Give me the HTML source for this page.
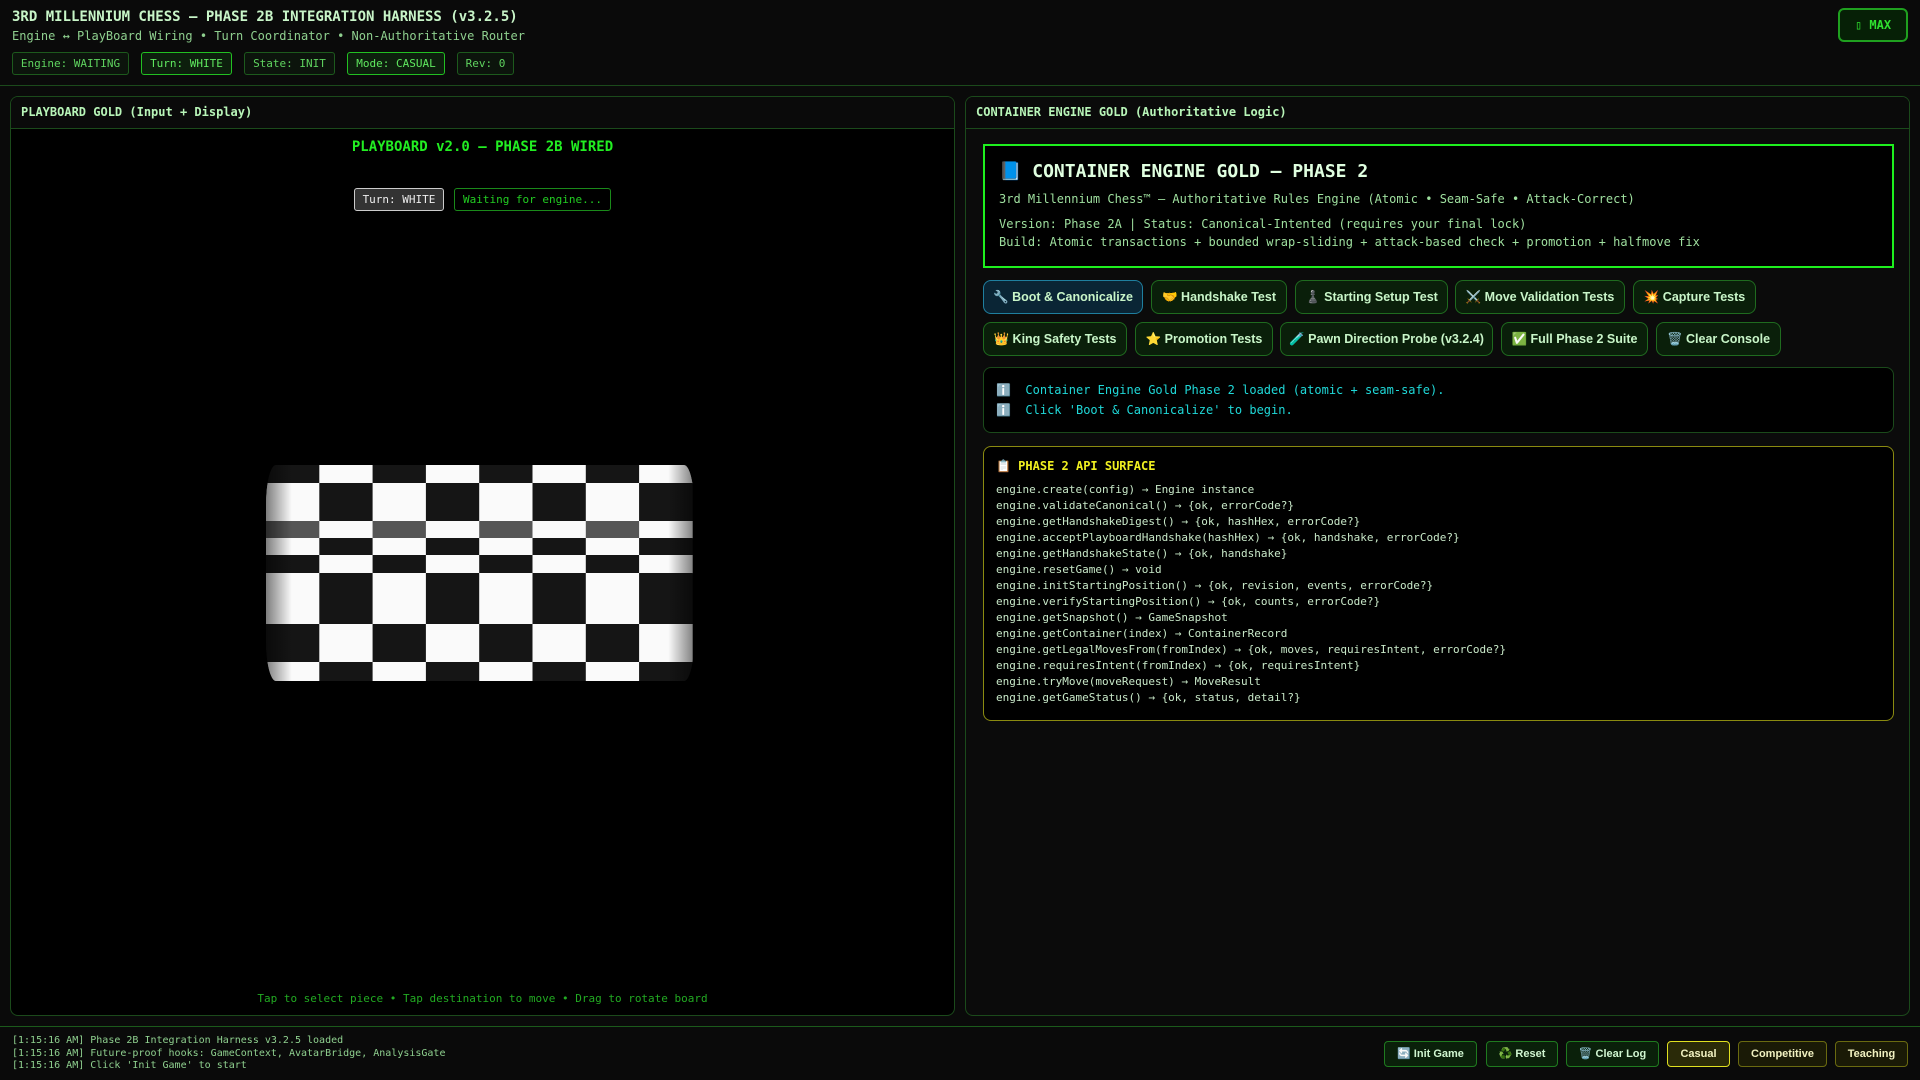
<!DOCTYPE html>
<html><head><meta charset="utf-8"><style>
*{box-sizing:border-box;margin:0;padding:0}
body{width:1920px;height:1080px;background:#0a0a0a;font-family:"DejaVu Sans Mono","Liberation Mono",monospace;color:#b8f5b8;position:relative;overflow:hidden}
.a{position:absolute}
.badge{position:absolute;top:52px;height:23px;border:1px solid #1d5a1d;border-radius:3px;font-size:11px;line-height:21px;padding:0 8px;color:#5fd35f;background:#0c140c;white-space:nowrap;text-align:center}
.badge.on{border-color:#22c022;color:#5fe85f;background:#0d1f0d}
.panel{position:absolute;top:96px;height:920px;border:1px solid #1b4a1b;border-radius:8px;overflow:hidden}
.ph{height:32px;border-bottom:1px solid #1b4a1b;font-size:12px;font-weight:bold;line-height:31px;padding-left:10px;color:#b8f5b8;background:#0a0a0a}
.btn{position:absolute;height:34px;border:1px solid #1f6b1f;border-radius:8px;background:#0a1f0a;color:#c8f5c8;font-family:"Liberation Sans",sans-serif;font-weight:bold;font-size:12.5px;line-height:32px;text-align:center;white-space:nowrap}
.bb{position:absolute;top:1041px;height:26px;border:1px solid #1f7a1f;border-radius:4px;background:#0a200a;color:#d0f5d0;font-family:"Liberation Sans",sans-serif;font-weight:bold;font-size:11px;line-height:24px;text-align:center;white-space:nowrap}
.bb.y{border-color:#6a6a10;background:#1a1a06;color:#f0f0c0}
.api div{height:16px;line-height:16px}
</style></head><body>
<div class="a" style="left:12px;top:9px;font-size:14px;font-weight:bold;color:#c8f5c8;white-space:nowrap">3RD MILLENNIUM CHESS — PHASE 2B INTEGRATION HARNESS (v3.2.5)</div>
<div class="a" style="left:12px;top:29px;font-size:12px;color:#8fd08f;white-space:nowrap">Engine ↔ PlayBoard Wiring • Turn Coordinator • Non-Authoritative Router</div>
<div class="badge" style="left:12px;width:117px;padding:0">Engine: WAITING</div>
<div class="badge on" style="left:141px;width:91px;padding:0">Turn: WHITE</div>
<div class="badge" style="left:244px;width:91px;padding:0">State: INIT</div>
<div class="badge on" style="left:347px;width:98px;padding:0">Mode: CASUAL</div>
<div class="badge" style="left:457px;width:57px;padding:0">Rev: 0</div>
<div class="a" style="left:1838px;top:8px;width:70px;height:34px;border:2px solid #1fa01f;border-radius:6px;background:#062006;color:#2fe02f;font-weight:bold;font-size:12px;line-height:30px;text-align:center">▯ MAX</div>
<div class="a" style="left:0;top:85px;width:1920px;height:1px;background:#1b4a1b"></div>

<div class="panel" style="left:10px;width:945px;background:#000">
<div class="ph">PLAYBOARD GOLD (Input + Display)</div>
<div class="a" style="left:0;width:943px;top:42px;text-align:center;font-size:14px;font-weight:bold;color:#22ee22">PLAYBOARD v2.0 — PHASE 2B WIRED</div>
<div class="a" style="left:343px;top:91px;width:90px;height:23px;border:1px solid #ccc;border-radius:3px;background:#333;color:#eee;font-size:11px;line-height:21px;text-align:center">Turn: WHITE</div>
<div class="a" style="left:443px;top:91px;width:157px;height:23px;border:1px solid #1a8a1a;border-radius:3px;color:#22cc22;font-size:11px;line-height:21px;text-align:center">Waiting for engine...</div>
<svg class="a" style="left:253px;top:368px" width="430" height="216" viewBox="0 0 430 216">
<defs><linearGradient id="sh" x1="0" x2="1"><stop offset="0" stop-color="#000" stop-opacity=".5"/><stop offset=".06" stop-color="#000" stop-opacity="0"/><stop offset=".94" stop-color="#000" stop-opacity="0"/><stop offset="1" stop-color="#000" stop-opacity=".5"/></linearGradient>
<clipPath id="cp"><rect x="2" y="0" width="428" height="216" rx="10" ry="40"/></clipPath></defs>
<g clip-path="url(#cp)" id="g"></g>
<rect x="2" y="0" width="428" height="216" fill="url(#sh)" clip-path="url(#cp)"/>
</svg>
<div class="a" style="left:0;width:943px;top:895px;text-align:center;font-size:11px;color:#22aa22">Tap to select piece • Tap destination to move • Drag to rotate board</div>
</div>

<div class="panel" style="left:965px;width:945px;background:#0b0b0b">
<div class="ph">CONTAINER ENGINE GOLD (Authoritative Logic)</div>
<div class="a" style="left:17px;top:47px;width:911px;height:124px;border:2px solid #1ef01e;background:#000;padding:15px 14px">
<div style="font-size:18px;font-weight:bold;color:#e0ffe0;height:28px">📘 CONTAINER ENGINE GOLD — PHASE 2</div>
<div style="font-size:12px;color:#9fe09f;margin-top:3px">3rd Millennium Chess™ — Authoritative Rules Engine (Atomic • Seam-Safe • Attack-Correct)</div>
<div style="font-size:12px;color:#9fe09f;margin-top:9px;line-height:18px">Version: Phase 2A | Status: Canonical-Intented (requires your final lock)<br>Build: Atomic transactions + bounded wrap-sliding + attack-based check + promotion + halfmove fix</div>
</div>
<div class="btn" style="left:17px;top:183px;width:160px;border-color:#1f7f9f;background:#0a2535">🔧 Boot &amp; Canonicalize</div>
<div class="btn" style="left:185px;top:183px;width:136px">🤝 Handshake Test</div>
<div class="btn" style="left:329px;top:183px;width:153px">♟️ Starting Setup Test</div>
<div class="btn" style="left:489px;top:183px;width:170px">⚔️ Move Validation Tests</div>
<div class="btn" style="left:667px;top:183px;width:123px">💥 Capture Tests</div>
<div class="btn" style="left:17px;top:225px;width:144px">👑 King Safety Tests</div>
<div class="btn" style="left:169px;top:225px;width:138px">⭐ Promotion Tests</div>
<div class="btn" style="left:314px;top:225px;width:213px">🧪 Pawn Direction Probe (v3.2.4)</div>
<div class="btn" style="left:535px;top:225px;width:147px">✅ Full Phase 2 Suite</div>
<div class="btn" style="left:690px;top:225px;width:125px">🗑️ Clear Console</div>
<div class="a" style="left:17px;top:270px;width:911px;height:66px;border:1px solid #1b4a1b;border-radius:8px;background:#000;padding:12px 12px;font-size:12px;color:#1fd8d8;line-height:20px">ℹ️&nbsp; Container Engine Gold Phase 2 loaded (atomic + seam-safe).<br>ℹ️&nbsp; Click 'Boot &amp; Canonicalize' to begin.</div>
<div class="a api" style="left:17px;top:349px;width:911px;height:275px;border:1px solid #8a8a10;border-radius:8px;background:#000;padding:11px 12px;font-size:11px;color:#c8e8c8">
<div style="font-weight:bold;color:#f0f020;font-size:12px;height:18px;margin-bottom:6px">📋 PHASE 2 API SURFACE</div>
<div>engine.create(config) → Engine instance</div>
<div>engine.validateCanonical() → {ok, errorCode?}</div>
<div>engine.getHandshakeDigest() → {ok, hashHex, errorCode?}</div>
<div>engine.acceptPlayboardHandshake(hashHex) → {ok, handshake, errorCode?}</div>
<div>engine.getHandshakeState() → {ok, handshake}</div>
<div>engine.resetGame() → void</div>
<div>engine.initStartingPosition() → {ok, revision, events, errorCode?}</div>
<div>engine.verifyStartingPosition() → {ok, counts, errorCode?}</div>
<div>engine.getSnapshot() → GameSnapshot</div>
<div>engine.getContainer(index) → ContainerRecord</div>
<div>engine.getLegalMovesFrom(fromIndex) → {ok, moves, requiresIntent, errorCode?}</div>
<div>engine.requiresIntent(fromIndex) → {ok, requiresIntent}</div>
<div>engine.tryMove(moveRequest) → MoveResult</div>
<div>engine.getGameStatus() → {ok, status, detail?}</div>
</div>
</div>

<div class="a" style="left:0;top:1026px;width:1920px;height:1px;background:#1b5a1b"></div>
<div class="a" style="left:12px;top:1035px;font-size:10px;line-height:12.5px;color:#8fd08f">[1:15:16 AM] Phase 2B Integration Harness v3.2.5 loaded<br>[1:15:16 AM] Future-proof hooks: GameContext, AvatarBridge, AnalysisGate<br>[1:15:16 AM] Click 'Init Game' to start</div>
<div class="bb" style="left:1384px;width:93px">🔄 Init Game</div>
<div class="bb" style="left:1486px;width:72px">♻️ Reset</div>
<div class="bb" style="left:1566px;width:93px">🗑️ Clear Log</div>
<div class="bb y" style="left:1667px;width:63px;border-color:#e0e020;background:#2a2a08">Casual</div>
<div class="bb y" style="left:1738px;width:89px">Competitive</div>
<div class="bb y" style="left:1835px;width:73px">Teaching</div>
<script>
var ys=[14,32,70,87,104,122,173,211,230],g=document.getElementById('g'),s='';
for(var r=0;r<8;r++)for(var c=0;c<8;c++){var d=(r+c)%2==0;var col=d?(r==2?'#555':'#151515'):'#fafafa';
s+='<rect x="'+(2+c*53.3)+'" y="'+(ys[r]-14)+'" width="53.6" height="'+(ys[r+1]-ys[r]+0.5)+'" fill="'+col+'"/>';}
g.innerHTML=s;
</script>
</body></html>
